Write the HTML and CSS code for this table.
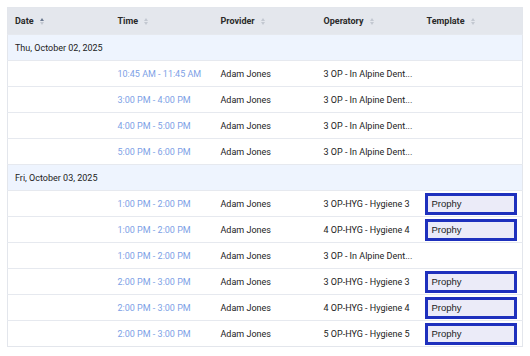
FILE: index.html
```html
<!DOCTYPE html>
<html lang="en">
<head>
    <meta charset="UTF-8">
    <title>Appointments</title>
    <link rel="stylesheet" href="styles.css">
</head>
<body>
    <div class="table-wrap">
        <table class="appt-table">
            <thead>
                <tr>
                    <th>Date <span class="sort asc"></span></th>
                    <th>Time <span class="sort"></span></th>
                    <th>Provider <span class="sort"></span></th>
                    <th>Operatory <span class="sort"></span></th>
                    <th>Template <span class="sort"></span></th>
                </tr>
            </thead>
            <tbody>
                <tr class="group-row"><td colspan="5">Thu, October 02, 2025</td></tr>
                <tr>
                    <td></td>
                    <td class="time">10:45 AM - 11:45 AM</td>
                    <td>Adam Jones</td>
                    <td>3 OP - In Alpine Dent...</td>
                    <td></td>
                </tr>
                <tr>
                    <td></td>
                    <td class="time">3:00 PM - 4:00 PM</td>
                    <td>Adam Jones</td>
                    <td>3 OP - In Alpine Dent...</td>
                    <td></td>
                </tr>
                <tr>
                    <td></td>
                    <td class="time">4:00 PM - 5:00 PM</td>
                    <td>Adam Jones</td>
                    <td>3 OP - In Alpine Dent...</td>
                    <td></td>
                </tr>
                <tr>
                    <td></td>
                    <td class="time">5:00 PM - 6:00 PM</td>
                    <td>Adam Jones</td>
                    <td>3 OP - In Alpine Dent...</td>
                    <td></td>
                </tr>
                <tr class="group-row"><td colspan="5">Fri, October 03, 2025</td></tr>
                <tr>
                    <td></td>
                    <td class="time">1:00 PM - 2:00 PM</td>
                    <td>Adam Jones</td>
                    <td>3 OP-HYG - Hygiene 3</td>
                    <td class="tpl"><div class="tpl-box">Prophy</div></td>
                </tr>
                <tr>
                    <td></td>
                    <td class="time">1:00 PM - 2:00 PM</td>
                    <td>Adam Jones</td>
                    <td>4 OP-HYG - Hygiene 4</td>
                    <td class="tpl"><div class="tpl-box">Prophy</div></td>
                </tr>
                <tr>
                    <td></td>
                    <td class="time">1:00 PM - 2:00 PM</td>
                    <td>Adam Jones</td>
                    <td>3 OP - In Alpine Dent...</td>
                    <td></td>
                </tr>
                <tr>
                    <td></td>
                    <td class="time">2:00 PM - 3:00 PM</td>
                    <td>Adam Jones</td>
                    <td>3 OP-HYG - Hygiene 3</td>
                    <td class="tpl"><div class="tpl-box">Prophy</div></td>
                </tr>
                <tr>
                    <td></td>
                    <td class="time">2:00 PM - 3:00 PM</td>
                    <td>Adam Jones</td>
                    <td>4 OP-HYG - Hygiene 4</td>
                    <td class="tpl"><div class="tpl-box">Prophy</div></td>
                </tr>
                <tr>
                    <td></td>
                    <td class="time">2:00 PM - 3:00 PM</td>
                    <td>Adam Jones</td>
                    <td>5 OP-HYG - Hygiene 5</td>
                    <td class="tpl"><div class="tpl-box">Prophy</div></td>
                </tr>
            </tbody>
        </table>
    </div>
</body>
</html>
```

FILE: styles.css
```css
* {
    margin: 0;
    padding: 0;
    box-sizing: border-box;
}

body {
    font-family: Roboto, "Liberation Sans", sans-serif;
    font-size: 9px;
    color: #222;
    background-color: #fff;
}

.table-wrap {
    padding: 7px 8px 0 7px;
}

/* Table */
.appt-table {
    width: 515px;
    border-collapse: collapse;
    table-layout: fixed;
    border: 1px solid #e3e6ec;
}

.appt-table th,
.appt-table td {
    width: 103px;
    padding: 0 7px;
    text-align: left;
    white-space: nowrap;
}

.appt-table th {
    height: 27px;
    background-color: #e4e7ed;
    font-weight: bold;
    color: #2a2a2a;
}

.appt-table td {
    height: 26px;
    border-top: 1px solid #e6e9ef;
}

.group-row td {
    background-color: #eef4fe;
}

.time {
    color: #7d9fe6;
}

/* Sort arrows */
.sort {
    display: inline-block;
    width: 5px;
    height: 7px;
    margin-left: 4px;
    vertical-align: -1px;
    position: relative;
}

.sort::before,
.sort::after {
    content: "";
    position: absolute;
    left: 0;
    border-left: 2.5px solid transparent;
    border-right: 2.5px solid transparent;
}

.sort::before {
    top: 0;
    border-bottom: 3px solid #c3c8d1;
}

.sort::after {
    bottom: 0;
    border-top: 3px solid #c3c8d1;
}

.sort.asc::before {
    border-bottom-color: #6c7a91;
}

/* Template cell */
.appt-table td.tpl {
    padding: 0 5px;
}

.tpl-box {
    height: 22px;
    border: 3px solid #1e30bd;
    background-color: #ebebf8;
    padding: 0 4px;
    line-height: 16px;
    font-family: "Liberation Sans", Arial, sans-serif;
    font-size: 9.5px;
    color: #222;
}
```
